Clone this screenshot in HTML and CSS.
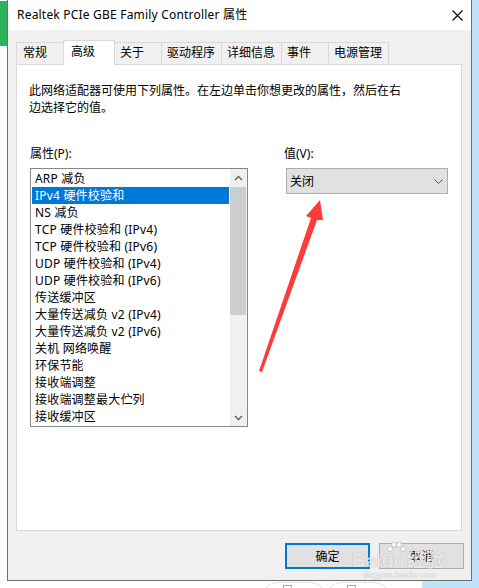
FILE: index.html
```html
<!DOCTYPE html>
<html lang="zh-CN">
<head>
    <meta charset="UTF-8">
    <meta name="viewport" content="width=device-width, initial-scale=1.0">
    <title>Realtek PCIe GBE Family Controller 属性</title>
    <link rel="stylesheet" href="styles.css">
</head>
<body>
    <div class="desk">
        <div class="desk-top">
            <div class="edge-left"><div class="app-green"></div></div>

            <!-- Dialog window -->
            <div class="window">
                <div class="titlebar">
                    <span class="title">Realtek PCIe GBE Family Controller 属性</span>
                    <svg class="close" width="11" height="11" viewBox="0 0 11 11">
                        <path d="M0.5 0.5L10.5 10.5M10.5 0.5L0.5 10.5" stroke="#000" stroke-width="1.1" fill="none"/>
                    </svg>
                </div>

                <div class="body">
                    <div class="tabs">
                        <div class="tab tab-first">常规</div>
                        <div class="tab active">高级</div>
                        <div class="tab">关于</div>
                        <div class="tab">驱动程序</div>
                        <div class="tab">详细信息</div>
                        <div class="tab">事件</div>
                        <div class="tab">电源管理</div>
                    </div>

                    <div class="panel">
                        <p class="desc">此网络适配器可使用下列属性。在左边单击你想更改的属性，然后在右<br>边选择它的值。</p>

                        <div class="fields">
                            <div class="col-left">
                                <div class="label">属性(P):</div>
                                <div class="listbox">
                                    <ul class="items">
                                        <li>ARP 减负</li>
                                        <li class="selected">IPv4 硬件校验和</li>
                                        <li>NS 减负</li>
                                        <li>TCP 硬件校验和 (IPv4)</li>
                                        <li>TCP 硬件校验和 (IPv6)</li>
                                        <li>UDP 硬件校验和 (IPv4)</li>
                                        <li>UDP 硬件校验和 (IPv6)</li>
                                        <li>传送缓冲区</li>
                                        <li>大量传送减负 v2 (IPv4)</li>
                                        <li>大量传送减负 v2 (IPv6)</li>
                                        <li>关机 网络唤醒</li>
                                        <li>环保节能</li>
                                        <li>接收端调整</li>
                                        <li>接收端调整最大伫列</li>
                                        <li>接收缓冲区</li>
                                    </ul>
                                    <div class="scrollbar">
                                        <div class="sb-btn">
                                            <svg width="9" height="6" viewBox="0 0 9 6"><path d="M1 5L4.5 1.5L8 5" stroke="#606060" stroke-width="1.4" fill="none"/></svg>
                                        </div>
                                        <div class="sb-track"><div class="sb-thumb"></div></div>
                                        <div class="sb-btn">
                                            <svg width="9" height="6" viewBox="0 0 9 6"><path d="M1 1L4.5 4.5L8 1" stroke="#606060" stroke-width="1.4" fill="none"/></svg>
                                        </div>
                                    </div>
                                </div>
                            </div>

                            <div class="col-right">
                                <div class="label">值(V):</div>
                                <div class="combo">
                                    <span>关闭</span>
                                    <svg width="9" height="5" viewBox="0 0 9 5"><path d="M0.5 0.5L4.5 4.5L8.5 0.5" stroke="#555" stroke-width="1" fill="none"/></svg>
                                </div>
                            </div>
                        </div>
                    </div>

                    <div class="buttons">
                        <button class="btn btn-default">确定</button>
                        <button class="btn">取消</button>
                    </div>
                </div>
            </div>

            <div class="edge-right"></div>
        </div>

        <!-- what peeks out below the dialog -->
        <div class="desk-bottom">
            <div class="bottom-white">
                <div class="pill"><span class="pill-icon"></span></div>
                <div class="pill"><span class="pill-icon"></span></div>
            </div>
            <div class="bottom-blue"></div>
        </div>

        <!-- red pointer arrow drawn over the screenshot -->
        <svg class="arrow" width="479" height="588" viewBox="0 0 479 588">
            <polygon points="259,371 311,218 306,216 320,200 323,220 317,220 262,372" fill="#ff3a3a"/>
        </svg>

        <div class="watermark">
            <svg class="paw" width="20" height="13" viewBox="0 0 20 13">
                <circle cx="4" cy="8" r="2.6"/><circle cx="8" cy="3.5" r="2.6"/>
                <circle cx="13" cy="3.5" r="2.6"/><circle cx="17" cy="8" r="2.6"/>
            </svg>
            <div class="wm-text">Bai<span class="wm-du">du</span>经验</div>
            <div class="wm-url">jingyan.baidu.com</div>
        </div>
    </div>
</body>
</html>
```

FILE: styles.css
```css
body {
    margin: 0;
    width: 479px;
    height: 588px;
    overflow: hidden;
    background: #fff;
    font-family: "Noto Sans", "Noto Sans CJK SC", sans-serif;
    font-size: 12px;
    color: #000;
}
.desk {
    position: relative;
    height: 588px;
}
.desk-top {
    display: flex;
    height: 581px;
}
.edge-left {
    width: 7px;
    flex: none;
}
.app-green {
    margin-top: 1px;
    height: 45px;
    background: #2bb35b;
}
.edge-right {
    flex: 1;
    background: #bfe3fb;
}
.window {
    width: 465px;
    flex: none;
    box-sizing: border-box;
    border: 1px solid #6f6f6f;
    border-top: none;
    background: #f0f0f0;
    display: flex;
    flex-direction: column;
}
.titlebar {
    height: 30px;
    flex: none;
    background: #fff;
    display: flex;
    align-items: center;
    justify-content: space-between;
    padding: 0 8px 0 9px;
}
.title {
    line-height: 16px;
    letter-spacing: 0.2px;
}
.body {
    flex: 1;
    padding: 10px 9px 0 8px;
    display: flex;
    flex-direction: column;
}

/* tabs */
.tabs {
    display: flex;
    align-items: flex-end;
    height: 25px;
    margin-bottom: -1px;
    position: relative;
    z-index: 1;
}
.tab {
    box-sizing: border-box;
    height: 22px;
    min-width: 48px;
    margin-bottom: 1px;
    margin-left: -1px;
    padding: 0 6px 0 5px;
    border: 1px solid #d9d9d9;
    border-bottom: none;
    background: #f0f0f0;
    line-height: 20px;
    white-space: nowrap;
}
.tab-first {
    margin-left: 0;
    padding-left: 6px;
}
.tab.active {
    height: 25px;
    width: 52px;
    margin-bottom: 0;
    padding-left: 7px;
    background: #fff;
    line-height: 22px;
    position: relative;
}

/* tab page */
.panel {
    width: 446px;
    height: 467px;
    box-sizing: border-box;
    border: 1px solid #d9d9d9;
    background: #fff;
    padding: 17px 0 0 12px;
}
.desc {
    margin: 0;
    line-height: 17px;
}
.fields {
    display: flex;
    margin-top: 30px;
}
.label {
    line-height: 16px;
    margin-bottom: 6px;
    margin-left: 1px;
}
.col-left {
    width: 219px;
}
.col-right {
    margin-left: 35px;
}
.listbox {
    margin-left: 1px;
    width: 218px;
    height: 259px;
    box-sizing: border-box;
    border: 1px solid #828790;
    display: flex;
}
.items {
    list-style: none;
    margin: 0;
    padding: 1px;
    flex: 1;
    overflow: hidden;
}
.items li {
    height: 17px;
    line-height: 17px;
    padding-left: 3px;
    white-space: nowrap;
    letter-spacing: 0.2px;
}
.items li.selected {
    background: #0078d7;
    color: #fff;
}
.scrollbar {
    width: 17px;
    flex: none;
    background: #f0f0f0;
    display: flex;
    flex-direction: column;
}
.sb-btn {
    height: 17px;
    display: flex;
    align-items: center;
    justify-content: center;
}
.sb-track {
    flex: 1;
}
.sb-thumb {
    margin: 1px 1px 0 0;
    height: 128px;
    background: #cdcdcd;
}
.combo {
    margin-left: 3px;
    width: 162px;
    height: 26px;
    box-sizing: border-box;
    border: 1px solid #adadad;
    background: #e1e1e1;
    display: flex;
    align-items: center;
    justify-content: space-between;
    padding: 0 4px 0 3px;
}

/* dialog buttons */
.buttons {
    display: flex;
    justify-content: flex-end;
    gap: 9px;
    margin-top: 12px;
    margin-right: -2px;
}
.btn {
    font: inherit;
    color: #000;
    width: 85px;
    height: 26px;
    padding: 0;
    background: #e1e1e1;
    border: 1px solid #adadad;
}
.btn-default {
    border: 2px solid #0078d7;
}

/* desktop strip below the window */
.desk-bottom {
    display: flex;
    height: 7px;
}
.bottom-white {
    width: 422px;
    overflow: hidden;
    display: flex;
    padding-left: 262px;
    box-sizing: border-box;
}
.bottom-blue {
    flex: 1;
    background: #bfe3fb;
}
.pill {
    width: 64px;
    height: 30px;
    margin-top: 1px;
    box-sizing: border-box;
    border: 1px solid #e2e2e2;
    border-radius: 15px;
    display: flex;
    align-items: flex-start;
    padding: 2px 0 0 20px;
}
.pill-icon {
    width: 7px;
    height: 10px;
    border: 1px solid #7cc77c;
    margin-right: 8px;
}

/* overlays */
.arrow {
    position: absolute;
    left: 0;
    top: 0;
    pointer-events: none;
}
.watermark {
    position: absolute;
    left: 352px;
    top: 541px;
    width: 100px;
    color: rgba(255, 255, 255, 0.75);
    text-shadow: 0 0 1px rgba(0, 0, 0, 0.3);
    pointer-events: none;
}
.paw {
    display: block;
    margin-left: 34px;
    fill: rgba(255, 255, 255, 0.8);
    stroke: rgba(0, 0, 0, 0.15);
}
.wm-text {
    font-family: "Liberation Sans", "Noto Sans CJK SC", sans-serif;
    font-size: 19px;
    font-weight: bold;
    line-height: 18px;
    margin-top: -2px;
}
.wm-du {
    margin-right: 2px;
}
.wm-url {
    font-family: "Liberation Sans", sans-serif;
    font-size: 9px;
    line-height: 10px;
    margin-left: 12px;
}
```
